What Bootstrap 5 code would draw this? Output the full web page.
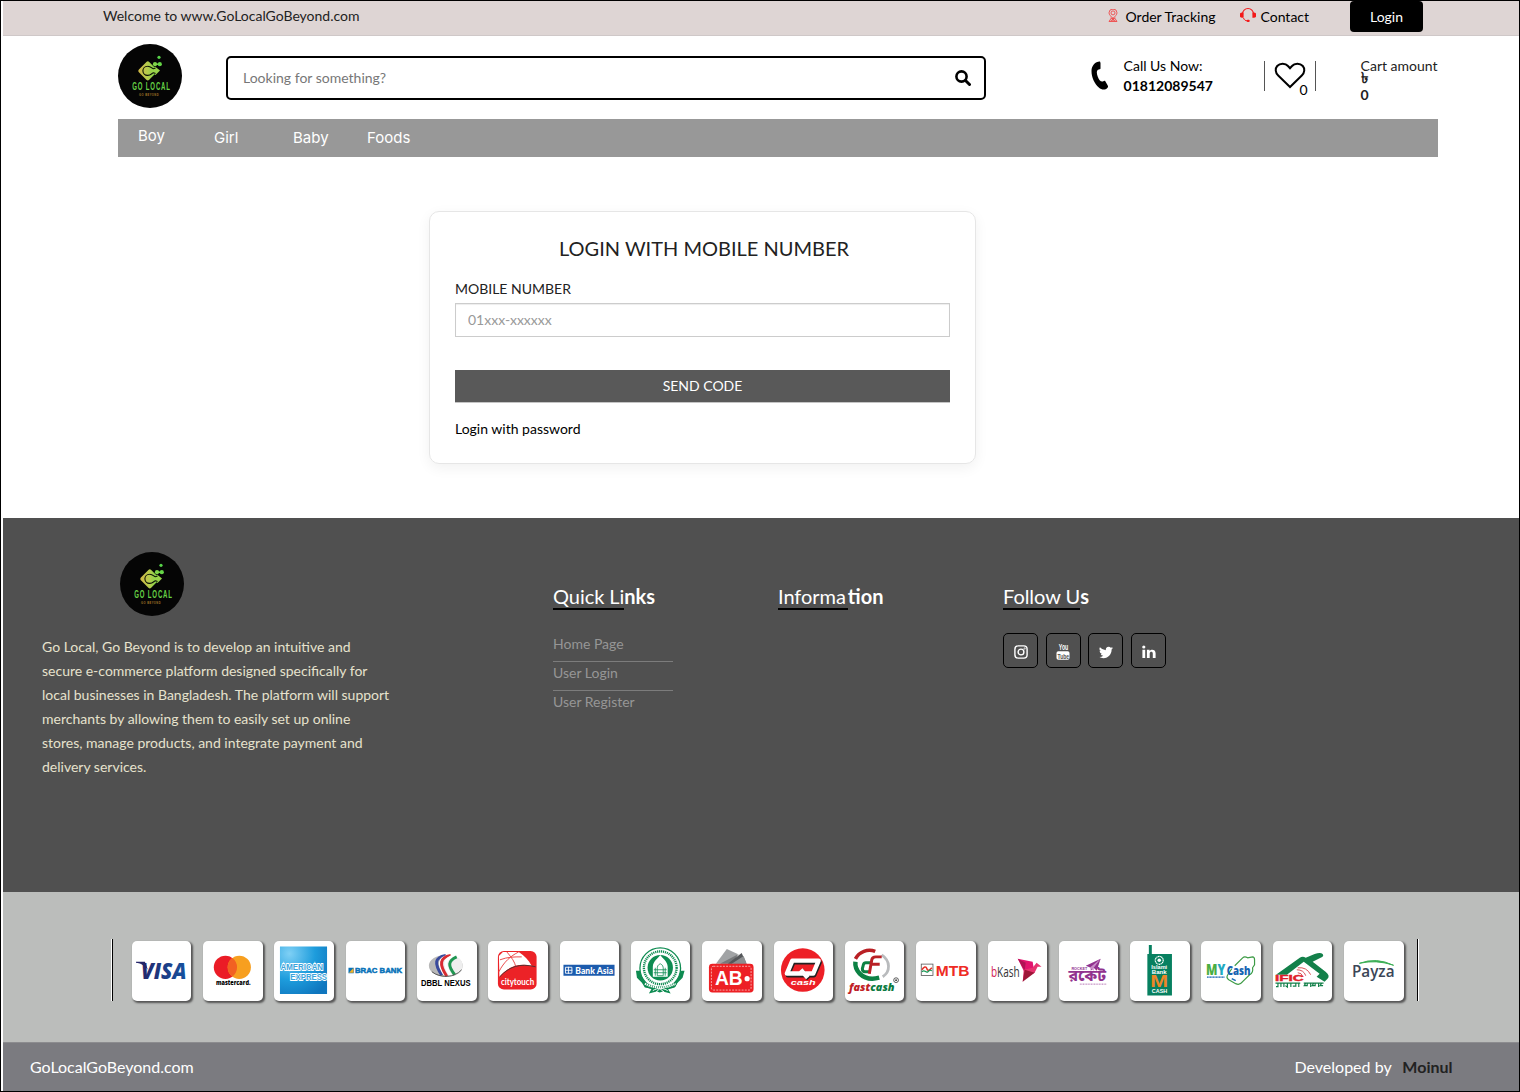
<!DOCTYPE html>
<html lang="en">
<head>
<meta charset="utf-8">
<meta name="viewport" content="width=device-width, initial-scale=1">
<title>Go Local Go Beyond</title>
<link href="https://cdn.jsdelivr.net/npm/bootstrap@5.3.0/dist/css/bootstrap.min.css" rel="stylesheet">
<style>
body{font-family:Lato,"Noto Sans",sans-serif;font-size:14px;line-height:20px;color:#222;background:#fff}
a{color:inherit;text-decoration:none}
svg{display:block;flex:none}
.page{width:1520px;height:1092px;border:1px solid #000;padding-left:2px;overflow:hidden}
.topbar{height:35px;background:#ded5d4;border-bottom:1px solid #cfc8c8;padding:0 96px 0 100px}
.topbar .msg{padding-top:5px}
.toplinks{color:#000}
.toplinks .lbl{padding-top:7px;line-height:17px}
.lnk-track{width:132px}
.lnk-track svg{margin:8px 7.500px 0 0}
.lnk-contact{width:110px}
.lnk-contact svg{margin:6px 4.500px 0 0}
.btn-login{width:73px;height:31px;background:#000;color:#fff;border-radius:4px;padding:6px 0 0;font-size:14px;line-height:20px;border:0}
.masthead{height:83px;padding:8px 0 0 115px}
.brand{width:64px;height:64px}
.searchbox{width:760px;height:44px;margin:12px 0 0 44px;border:2px solid #000;border-radius:5px;padding:0 13px 0 15px}
.searchbox .form-control,.loginbox .form-control{border-radius:0;font:14px/20px Lato,sans-serif;color:#333}
.searchbox .form-control{border:0;padding:0;box-shadow:none}
.searchbox .form-control::placeholder{color:#777}
.phone{margin:17px 0 0 105px}
.callus{margin:12px 0 0 14.600px;width:90px;color:#000}
.wish{position:relative;width:52px;height:30px;border:solid #555;border-width:0 1.5px;margin:17px 0 0 50px}
.wish svg{margin-left:9px}
.wish .count{position:absolute;left:35px;top:19px;color:#000;line-height:20px}
.cart{margin:12px 0 0 45px;width:80px}
.cart .cur{font-size:15px;line-height:10px;height:9px;margin-top:-4px;margin-bottom:4px}
.mainnav{width:1320px;height:38px;margin-left:115px;background:#989898;color:#fff;font:400 15px/20px Inter,sans-serif;letter-spacing:.02px;padding:9px 20px 0}
.mainnav a{display:block}
.n-boy{width:76px;margin-top:-2px}
.n-girl{width:79px}
.n-baby{width:74px}
.content{height:361px;padding:54px 0 0 426px}
.loginbox{width:547px;height:253px;border:1px solid #e6e6e6;border-radius:10px;box-shadow:0 4px 14px rgba(0,0,0,.06);padding:23px 25px 0}
.loginbox h1{font-size:20px;line-height:26px;margin:0 0 0 3px;font-weight:400}
.loginbox label{margin-top:18px;line-height:20px;display:block}
.loginbox .form-control{margin-top:4px;height:34px;border:1px solid #ccc;padding:5px 12px 7px;box-shadow:inset 0 1px 1px rgba(0,0,0,.075)}
.loginbox .form-control::placeholder{color:#999}
.loginbox .pwd{margin-top:16px}
.btn-code{margin-top:33px;height:33px;background:#595959;color:#fff;border:0;border-bottom:1px solid #c4c4c4;border-radius:0;font-size:14px;line-height:20px;padding:6px}
.footer-main{height:374px;background:#505050}
.about{width:550px;padding:34px 0 0 39px}
.about .brand{margin-left:78px}
.about p{width:352px;line-height:24px;margin:19px 0 0;color:#e6e2cd}
.fcol{width:225px;padding-top:66px}
.fcol h2{font-size:20px;line-height:24px;font-weight:400;color:#fff;margin:0 0 23px;display:flex;letter-spacing:-.05px;font-variant-ligatures:common-ligatures}
.fcol h2 span{border-bottom:2px solid #000}
.fcol h2 b{font-weight:700;letter-spacing:0}
.fcol h2 .wide{padding-right:2px}
.flinks{width:120px;color:#969696}
.flinks li{height:29px;line-height:20px;padding-top:1px}
.flinks li+li{border-top:1px solid #7c7c7c}
.flinks li:first-child{height:28px}
.social{gap:7.700px}
.soc{width:35px;height:35px;border:1px solid #000;border-radius:5px;padding-top:2px}
.payments{height:150px;background:#bbbdbb;padding:47px 0 0 108px}
.rule{width:2px;height:62px;border-left:1px solid #fff;border-right:1px solid #000}
.rule.end{border-left:1px solid #000;border-right:1px solid #fff}
.paylist{gap:11.82px;margin:2px 13px 0 18.800px}
.pay{width:59.500px;height:59.500px;background:#fff;border-radius:5px;box-shadow:1.5px 1.5px 2px #555}
.copyright{height:49px;background:#7b7b80;border-top:1px solid #8c8c8f;color:#fff;font-size:16px;padding:0 66.500px 0 27px}
.copyright b{color:#222;margin-left:7px}
</style>
</head>
<body>
<svg width="0" height="0" class="position-absolute">
<defs>
<linearGradient id="lg" x1="0" y1="1" x2="1" y2="0"><stop offset="0" stop-color="#d5b745"/><stop offset=".5" stop-color="#b4cc4c"/><stop offset="1" stop-color="#65d646"/></linearGradient>
<linearGradient id="vg"><stop offset="0" stop-color="#24266a"/><stop offset="1" stop-color="#1552a0"/></linearGradient>
<radialGradient id="ag" cx=".2" cy=".15" r="1"><stop offset="0" stop-color="#7fd0f5"/><stop offset=".55" stop-color="#1d9cdc"/><stop offset="1" stop-color="#0f76be"/></radialGradient>
<symbol id="logo" viewBox="0 0 64 64">
<circle cx="32" cy="32" r="32" fill="#050505"/>
<rect x="22.500" y="19.500" width="14.600" height="14.600" rx="2" transform="rotate(45 29.800 26.800)" fill="url(#lg)"/>
<path d="M37 22.500L42 26.500L37.500 31L33 27z" fill="#99d44a"/>
<path d="M37.500 24l-2 .8c-1.500 0-2.500-2.800-6-2.600a4.600 4.600 0 0 0 0 9.200c3.500.2 4.500-2.600 6-2.600l2 .8" stroke="#0a0f04" stroke-width="1.100" fill="none"/>
<path d="M36 20.200h6" stroke="#72d646" stroke-width="1.500"/><circle cx="37" cy="20.200" r="2.100" fill="#80d548"/><circle cx="41.800" cy="20.200" r="2.100" fill="#65d646"/><circle cx="41" cy="13.300" r="1.600" fill="#57d349"/>
<g transform="translate(14.200 46.200) scale(.56 1)"><text font-family="Liberation Sans" font-weight="700" font-size="10.800" letter-spacing="1.500" fill="#66d345">GO LOCAL</text></g>
<text x="21" y="51.500" textLength="19.500" font-family="Liberation Sans" font-weight="700" font-size="2.600" fill="#a57828">GO BEYOND</text>
</symbol>
</defs></svg>
<div class="page">
<header>
<div class="topbar d-flex justify-content-between">
<div class="msg">Welcome to www.GoLocalGoBeyond.com</div>
<div class="toplinks d-flex">
<a href="#" class="d-flex lnk-track"><svg width="10" height="14" viewBox="0 0 10 14" fill="none" stroke="#ef4848" stroke-width=".9"><path d="M5 10C3 7 1 5.800 1 3.800a4 3.700 0 0 1 8 0C9 5.800 7 7 5 10z"/><circle cx="5" cy="3.900" r="2"/><path d="M3 9.500L1 12.500h8L7 9.500M5 8v4M2.500 12l5-3M7.500 12l-5-3"/></svg><span class="lbl">Order Tracking</span></a>
<a href="#" class="d-flex lnk-contact"><svg width="16" height="16" viewBox="0 0 16 16"><path d="M2.500 8V6.800a5.500 5.300 0 0 1 11 0V8" fill="none" stroke="#f31818" stroke-width="1.100"/><path d="M3.600 5.500v5.300H2.300A2.600 2.600 0 0 1 2.300 5.500zM12.400 5.500v5.300h1.300a2.600 2.600 0 0 0 0-5.300z" fill="#f31818"/><path d="M3.500 11c.7 2 2 2.700 3.500 2.800" fill="none" stroke="#f31818"/><rect x="6.700" y="12.700" width="3" height="2.200" rx="1" fill="#f31818"/></svg><span class="lbl">Contact</span></a>
<a href="#" class="btn btn-login">Login</a>
</div>
</div>
<div class="masthead d-flex">
<svg class="brand"><use href="#logo"/></svg>
<div class="searchbox d-flex align-items-center"><input class="form-control bg-transparent" placeholder="Looking for something?"><svg width="16" height="16" viewBox="0 0 16 16" fill="none" stroke="#000"><circle cx="6.500" cy="6.500" r="5.100" stroke-width="2.600"/><path d="M10.500 10.500l4 4" stroke-width="3" stroke-linecap="round"/></svg></div>
<svg class="phone" width="18" height="29" viewBox="0 0 18 29"><path d="M9 .5L9.500 2v5.500C9.500 8.500 8 8.300 7 8.700c-1.800 1.300-1.200 4.300-.3 6.800 1 3.500 3.300 5.600 5.100 5 1.300-.5 2-1 2.500-.3l2.300 4.100c.6 1 .7 1.700-.3 2.700-2 2.200-5.500 2.200-8.500-.4C3.500 22.500 .5 16.500 .5 10 .5 4.500 4.500 .3 9 .5z"/></svg>
<div class="callus">Call Us Now:<br><b>01812089547</b></div>
<div class="wish"><svg width="32" height="28" viewBox="0 0 32 28"><path d="M16 26L4.200 14.500C1.200 11.500 1 7.500 3.200 5 6 1.800 11.500 2 14 5l2 2.200L18 5c2.500-3 8-3.200 10.800 0 2.200 2.500 2 6.500-1 9.500z" fill="none" stroke="#000" stroke-width="2"/></svg><span class="count">0</span></div>
<div class="cart">Cart amount<div class="cur fw-bold">৳</div><b>0</b></div>
</div>
<nav class="mainnav d-flex"><a href="#" class="n-boy">Boy</a><a href="#" class="n-girl">Girl</a><a href="#" class="n-baby">Baby</a><a href="#">Foods</a></nav>
</header>
<main class="content">
<form class="loginbox">
<h1 class="text-center">LOGIN WITH MOBILE NUMBER</h1>
<label for="mob">MOBILE NUMBER</label>
<input id="mob" class="form-control" placeholder="01xxx-xxxxxx">
<button type="button" class="btn btn-code w-100 d-block">SEND CODE</button>
<a href="#" class="d-inline-block text-black pwd">Login with password</a>
</form>
</main>
<footer>
<div class="footer-main d-flex">
<div class="about"><svg class="brand"><use href="#logo"/></svg>
<p>Go Local, Go Beyond is to develop an intuitive and secure e-commerce platform designed specifically for local businesses in Bangladesh. The platform will support merchants by allowing them to easily set up online stores, manage products, and integrate payment and delivery services.</p></div>
<div class="fcol"><h2><span>Quick Li</span><b>nks</b></h2>
<ul class="list-unstyled flinks"><li><a href="#">Home Page</a></li><li><a href="#">User Login</a></li><li><a href="#">User Register</a></li></ul></div>
<div class="fcol"><h2><span class="wide">Informa</span><b>tion</b></h2></div>
<div class="fcol"><h2><span>Follow U</span><b>s</b></h2>
<div class="d-flex social">
<a class="soc d-flex align-items-center justify-content-center" href="#"><svg width="14" height="14" viewBox="0 0 14 14" fill="none" stroke="#fff" stroke-width="1.400"><rect x=".9" y=".9" width="12.200" height="12.200" rx="3.300"/><circle cx="7" cy="7" r="2.900"/><circle cx="10.600" cy="3.400" r=".3"/></svg></a>
<a class="soc d-flex align-items-center justify-content-center" href="#"><svg width="16" height="20" viewBox="-1 -2 16 20" font-family="Liberation Sans" font-weight="700"><g transform="translate(2.800 6.200) scale(.58 1)"><text font-size="9" fill="#fff">You</text></g><rect x=".5" y="7.300" width="13" height="8.500" rx="1.800" fill="#fff"/><g transform="translate(1.600 14.500) scale(.62 1)"><text font-size="8" fill="#505050">Tube</text></g></svg></a>
<a class="soc d-flex align-items-center justify-content-center" href="#"><svg width="14" height="14" viewBox="0 0 16 16" fill="#fff"><path d="M5.026 15c6.038 0 9.341-5.003 9.341-9.334 0-.14 0-.282-.006-.422A6.685 6.685 0 0 0 16 3.542a6.658 6.658 0 0 1-1.889.518 3.301 3.301 0 0 0 1.447-1.817 6.533 6.533 0 0 1-2.087.793A3.286 3.286 0 0 0 7.875 6.030a9.325 9.325 0 0 1-6.767-3.429 3.289 3.289 0 0 0 1.018 4.382A3.323 3.323 0 0 1 .64 6.575v.045a3.288 3.288 0 0 0 2.632 3.218 3.203 3.203 0 0 1-.865.115 3.230 3.230 0 0 1-.614-.057 3.283 3.283 0 0 0 3.067 2.277A6.600 6.600 0 0 1 .780 13.580a6.320 6.320 0 0 1-.780-.045A9.344 9.344 0 0 0 5.026 15z"/></svg></a>
<a class="soc d-flex align-items-center justify-content-center" href="#"><svg width="14" height="14" viewBox="0 0 14 14" fill="#fff"><circle cx="1.800" cy="2" r="1.600"/><path d="M.4 4.800h2.800v8.300H.4zM4.900 4.800h2.700v1.200c1.500-2.200 6-1.900 6 2.300v4.800h-2.800V8.700c0-2.600-3.100-2.300-3.100 0v4.400H4.900z"/></svg></a>
</div></div>
</div>
<div class="payments d-flex">
<div class="rule"></div>
<div class="paylist d-flex">
<svg class="pay" viewBox="0 0 60 60"><text x="9" y="38" font-family="Open Sans" font-weight="800" font-style="italic" font-size="23.500" textLength="46" lengthAdjust="spacingAndGlyphs" fill="url(#vg)">VISA</text><path d="M4 21h9l3 8C12 24 8 22.500 4 22z" fill="#24266a"/></svg>
<svg class="pay" viewBox="0 0 60 60"><circle cx="22.600" cy="26.500" r="11.700" fill="#eb1c26"/><circle cx="36.600" cy="26.500" r="11.700" fill="#f79f1f"/><path d="M29.600 17.100a11.700 11.700 0 0 1 0 18.800a11.700 11.700 0 0 1 0-18.800" fill="#f26122"/><text x="13" y="44.500" font-family="Open Sans" font-weight="800" font-size="6.500" textLength="35" lengthAdjust="spacingAndGlyphs">mastercard.</text></svg>
<svg class="pay" viewBox="0 0 60 60"><path fill="url(#ag)" d="M6 5.500h47.500v48H6z"/><g font-family="Liberation Sans" font-weight="700" font-size="9.500" fill="#3ba4dc" stroke="#fff" stroke-width="1.800" paint-order="stroke"><text x="6.500" y="29.500" textLength="43" lengthAdjust="spacingAndGlyphs">AMERICAN</text><text x="16.500" y="39.500" textLength="37" lengthAdjust="spacingAndGlyphs">EXPRESS</text></g></svg>
<svg class="pay" viewBox="0 0 60 60"><path fill="#0872b9" d="M2.500 27h5.300v5.500H2.500z"/><path fill="#f4b225" d="M3 32l4.500-4.700V32z"/><text x="9" y="32.500" font-family="Liberation Sans" font-weight="700" font-size="7.700" textLength="47.500" lengthAdjust="spacingAndGlyphs" fill="#0872b9" stroke="#0872b9" stroke-width=".5">BRAC BANK</text></svg>
<svg class="pay" viewBox="0 0 60 60"><ellipse cx="29" cy="25" rx="17" ry="11" fill="#b8b8b8"/><ellipse cx="35" cy="25" rx="11" ry="10.500" fill="#eee"/><g fill="none" stroke-width="3"><path d="M29 14.500c-11 2-12 8-4 20" stroke="#394a9d"/><path d="M32 14.500c-11 2-12 9-4 20.500" stroke="#fff" stroke-width="1.500"/><path d="M34 14.500c-11 2-12 9-4 21" stroke="#d92b32"/><path d="M37 15c-10 3-10 9-3 20" stroke="#fff"/><path d="M40 16c-9 4-9 9-2 18" stroke="#1f9651"/></g><path d="M15 31c8 6.500 23 6.500 30-2" fill="none" stroke="#555" stroke-width="1"/><text x="4" y="45.800" font-family="Liberation Sans" font-weight="700" font-size="8.500" textLength="50" lengthAdjust="spacingAndGlyphs">DBBL NEXUS</text></svg>
<svg class="pay" viewBox="0 0 60 60"><rect x="10" y="10" width="39" height="39" rx="6" fill="#ec2227"/><path d="M15 11h16c6 4 10 8 13 14-14-3-24 1-32.500 11l-.5-21z" fill="#fff"/><path d="M12 19c8-3 14-3 22-3M19 11c5 6 8 10 9 15M31 11c-8 4-15 10-20 20" fill="none" stroke="#ec4a4b" stroke-width="1"/><path d="M12 36c9-10 20-14 36-10" fill="none" stroke="#333" stroke-width=".8"/><text x="13" y="44.300" font-family="Lato" font-weight="700" font-size="8.500" textLength="33.500" lengthAdjust="spacingAndGlyphs" fill="#fff">citytouch</text></svg>
<svg class="pay" viewBox="0 0 60 60"><path fill="#1c5bad" d="M3.500 24h51.500v11H3.500z"/><path d="M5.500 26.500h6.500v6H5.500zM8.500 26v7M5 29.500h7.500" fill="none" stroke="#fff" stroke-width=".9"/><text x="15.500" y="32.800" font-family="Lato" font-weight="900" font-size="8.800" textLength="38" lengthAdjust="spacingAndGlyphs" fill="#fff">Bank Asia</text></svg>
<svg class="pay" viewBox="0 0 60 60"><path d="M5 30h7l5 13h25l5-13h7l-2 7-5 5-3 5-7 1 3 5-8-2-3 1-3-1-8 2 3-5-7-1-3-5-5-5z" fill="#0e8b51"/><circle cx="29.500" cy="27.500" r="20.500" fill="#fff" stroke="#0e8b51" stroke-width="1.300"/><circle cx="29.500" cy="27" r="16.500" fill="none" stroke="#0e8b51" stroke-width="2.400" stroke-dasharray="1.200 .8"/><circle cx="29.500" cy="27" r="12.800" fill="#0e8b51"/><path d="M22 36V26c0-6 6-9 7.500-12 1.500 3 7.500 6 7.500 12v10z" fill="#fff"/><path d="M26.500 27c0-3 3-4 3-4s3 1 3 4v8h-6zM23 29h13M23 32h13M24.500 27v8M34.500 27v8" fill="none" stroke="#0e8b51" stroke-width=".8"/><path d="M11 39c10 9 27 9 37 0l-3 7c-9 5-22 5-31 0z" fill="#0e8b51"/><path d="M14 43c9 5 22 5 31 0" fill="none" stroke="#fff" stroke-width="2.200" stroke-dasharray="1.400 .7"/><path d="M22 50c5-3 10-3 15 0M25 52l4-4 5 4" fill="none" stroke="#fff"/></svg>
<svg class="pay" viewBox="0 0 60 60"><path d="M14 23L25 8l11 5-5 10z" fill="#a1a3a5"/><path d="M18 23l19-10-7 10z" fill="#77797b"/><path d="M26 23l14-11 5 11z" fill="#55575a"/><path d="M30 23l12-8 3 8z" fill="#8c8e90"/><rect x="7" y="23" width="45" height="29" rx="3.500" fill="#ed2024"/><rect x="9.500" y="25.500" width="40" height="24" rx="2" fill="none" stroke="#fff" stroke-width=".6" stroke-dasharray="2 1.200"/><text x="13" y="44.500" font-family="Liberation Sans" font-weight="700" font-size="20" textLength="28" lengthAdjust="spacingAndGlyphs" fill="#fff">AB</text><circle cx="45.500" cy="38" r="2.600" fill="#fff"/></svg>
<svg class="pay" viewBox="0 0 60 60"><circle cx="29" cy="29.300" r="22" fill="#ed1f26"/><g stroke-linejoin="round" fill="none" stroke-width="4.500"><path d="M19.500 21.500H46l-5.500 13H14zM28 30l7 8" stroke="#222"/><path d="M18.500 19.800H45l-5.500 13H13zM27 29l7 8" stroke="#fff"/></g><text x="17" y="44.500" font-family="Liberation Sans" font-weight="700" font-style="italic" font-size="7.500" textLength="25" lengthAdjust="spacingAndGlyphs" fill="#fff">cash</text></svg>
<svg class="pay" viewBox="0 0 60 60"><g fill="none" stroke-width="3.600"><path d="M10.500 18a16 16 0 0 1 20-7.500" stroke="#b92025"/><path d="M10.500 21c-1 9 7 17 17 17 3 0 5-.5 7-1" stroke="#0c8144" stroke-width="4.500"/><path d="M37 14c9 6 9 17 1 22" stroke="#b9bbbd" stroke-width="2.800"/></g><path d="M27 22H21q-2 0-2.500 2l-1 4q0 3 2.500 3h6" fill="none" stroke="#0c8144" stroke-width="3"/><path d="M24.500 33l2.500-14q.5-3 4-3H37M27 23.500h8" fill="none" stroke="#b92025" stroke-width="3"/><text x="4" y="50" font-family="Open Sans" font-weight="800" font-style="italic" font-size="10.500" textLength="46" lengthAdjust="spacingAndGlyphs" fill="#c02026">fast<tspan fill="#0c7b42">cash</tspan></text><circle cx="51.500" cy="39.500" r="2.400" fill="none" stroke="#333" stroke-width=".8"/><circle cx="51.500" cy="39.500" r=".9" fill="#333"/></svg>
<svg class="pay" viewBox="0 0 60 60"><rect x="5.300" y="23.300" width="11.800" height="11.500" fill="#fff" stroke="#555" stroke-width=".8"/><path d="M6 29c2-3 4-4 5-1s3 1 5-1" fill="none" stroke="#e6332a" stroke-width="1.600"/><path d="M6 31c3-3 4 2 6 0s2-2 4-1" fill="none" stroke="#1d9b5a" stroke-width="1.300"/><text x="20" y="35.200" font-family="Liberation Sans" font-weight="700" font-size="15.500" textLength="34" lengthAdjust="spacingAndGlyphs" fill="#ee2b24">MTB</text></svg>
<svg class="pay" viewBox="0 0 60 60"><text x="3" y="36" font-family="Open Sans" font-size="14" textLength="29" lengthAdjust="spacingAndGlyphs" fill="#333"><tspan fill="#d12053">b</tspan>Kash</text><path d="M30 18l15 3 2 11-11-2z" fill="#e2136e"/><path d="M30 18l8 4-1 8z" fill="#b01254"/><path d="M45 27l4-5 5 4h-4l-3 6-9 5-3 4 1-12z" fill="#e6336f"/><path d="M35 41l2-12 10 3z" fill="#9e1638"/></svg>
<svg class="pay" viewBox="0 0 60 60"><path d="M27 25l15-7-4 12-3-3-3 3v-3z" fill="#91338f"/><path d="M31 27l11-9-7 9v3z" fill="#c88dc8"/><text x="12.500" y="29" font-family="Liberation Sans" font-weight="700" font-size="4" textLength="16" lengthAdjust="spacingAndGlyphs" fill="#91338f">ROCKET</text><g transform="translate(9.500 40.500)"><text font-family="Noto Sans Bengali,Noto Sans,sans-serif" font-weight="700" font-size="15" textLength="38" lengthAdjust="spacingAndGlyphs" fill="#91338f">রকেট</text></g><path d="M21 43.500h27" fill="none" stroke="#91338f" stroke-width=".7" stroke-dasharray="1 .6"/></svg>
<svg class="pay" viewBox="0 0 60 60"><path d="M19 4h3v9h20.300v42H17.500V13H19z" fill="#078060"/><circle cx="29.500" cy="19.500" r="4" fill="none" stroke="#fff" stroke-width="1.200" stroke-dasharray="1.300 .4"/><circle cx="29.500" cy="19.500" r="1.800" fill="#fff"/><g font-family="Liberation Sans" font-weight="700" fill="#fff"><text x="21.500" y="28.500" font-size="4.800" textLength="16" lengthAdjust="spacingAndGlyphs">Islami</text><text x="22" y="33.300" font-size="4.800" textLength="15" lengthAdjust="spacingAndGlyphs">Bank</text><text x="20.500" y="46.500" font-size="16.500" textLength="18" lengthAdjust="spacingAndGlyphs" fill="#ee8727">M</text><text x="22" y="52.700" font-size="6" textLength="15.500" lengthAdjust="spacingAndGlyphs">CASH</text></g></svg>
<svg class="pay" viewBox="0 0 60 60"><path d="M34 25l8-8q2-2 5 0l5-1q2 0 2 3v5l-2 3q1 5-3 7l-7 7q-3 4-7 2l-7-4q-3-2-1-5l4-6" fill="#fff" stroke="#3d9b45" stroke-width="1.200"/><path d="M31 38l4 2" stroke="#1769b4" stroke-width="1.500"/><g font-family="Open Sans" font-weight="800"><text x="5" y="34" font-size="16" textLength="19.500" lengthAdjust="spacingAndGlyphs" fill="#21a9c1"><tspan fill="#4bae42">M</tspan>Y</text><text x="26" y="34" font-size="11.500" textLength="24" lengthAdjust="spacingAndGlyphs" fill="#1663b2">Cash</text></g><path d="M6 36.500h18" stroke="#1663b2" stroke-width="1.300" stroke-dasharray="1.200 .3"/></svg>
<svg class="pay" viewBox="0 0 60 60"><path d="M3 34L27 17q3-2 6 0l9-4q6-2 8 0t-2 4l-8 4 13 10q5 4 2 7l-3 3-8-5 3-3-16-12-17 13z" fill="#13804a"/><path d="M24 29q7 0 9 6M25 32q4 0 5 4M25 27q9-1 13 7" fill="none" stroke="#da5257" stroke-width="1"/><text x="2" y="40.300" font-family="Liberation Sans" font-weight="700" font-size="8.300" textLength="29" lengthAdjust="spacingAndGlyphs" fill="#df1f2b" stroke="#df1f2b" stroke-width=".4">IFIC</text><path d="M2.500 42.500h25M31 42.500h20M5 42.500v3.500h-2M8 42.500v4M11 42.500v4M14.500 42.500v4l-2-1.500M18 42.500v4M20 45.500h3v-3M26 42.500v4M33 42.500l-1.500 2.500h3v-2.500M38 42.500v4M41 42.500l-1.500 2.500h3v-2.500M46 42.500v4M49 42.500l-1.500 2.500h3" fill="none" stroke="#13804a" stroke-width="1.200"/></svg>
<svg class="pay" viewBox="0 0 60 60"><text x="8" y="36" font-family="Open Sans" font-weight="600" font-size="16.500" textLength="43" lengthAdjust="spacingAndGlyphs" fill="#3b4657">Payza</text><path d="M15.500 22.500q17-6.500 34.500 2-17-6-34.500-2z" fill="#3cae55" stroke="#3cae55"/></svg>
</div>
<div class="rule end"></div>
</div>
<div class="copyright d-flex justify-content-between align-items-center"><span>GoLocalGoBeyond.com</span><span>Developed by <b>Moinul</b></span></div>
</footer>
</div>
<script src="https://cdn.jsdelivr.net/npm/bootstrap@5.3.0/dist/js/bootstrap.bundle.min.js"></script>
</body>
</html>
